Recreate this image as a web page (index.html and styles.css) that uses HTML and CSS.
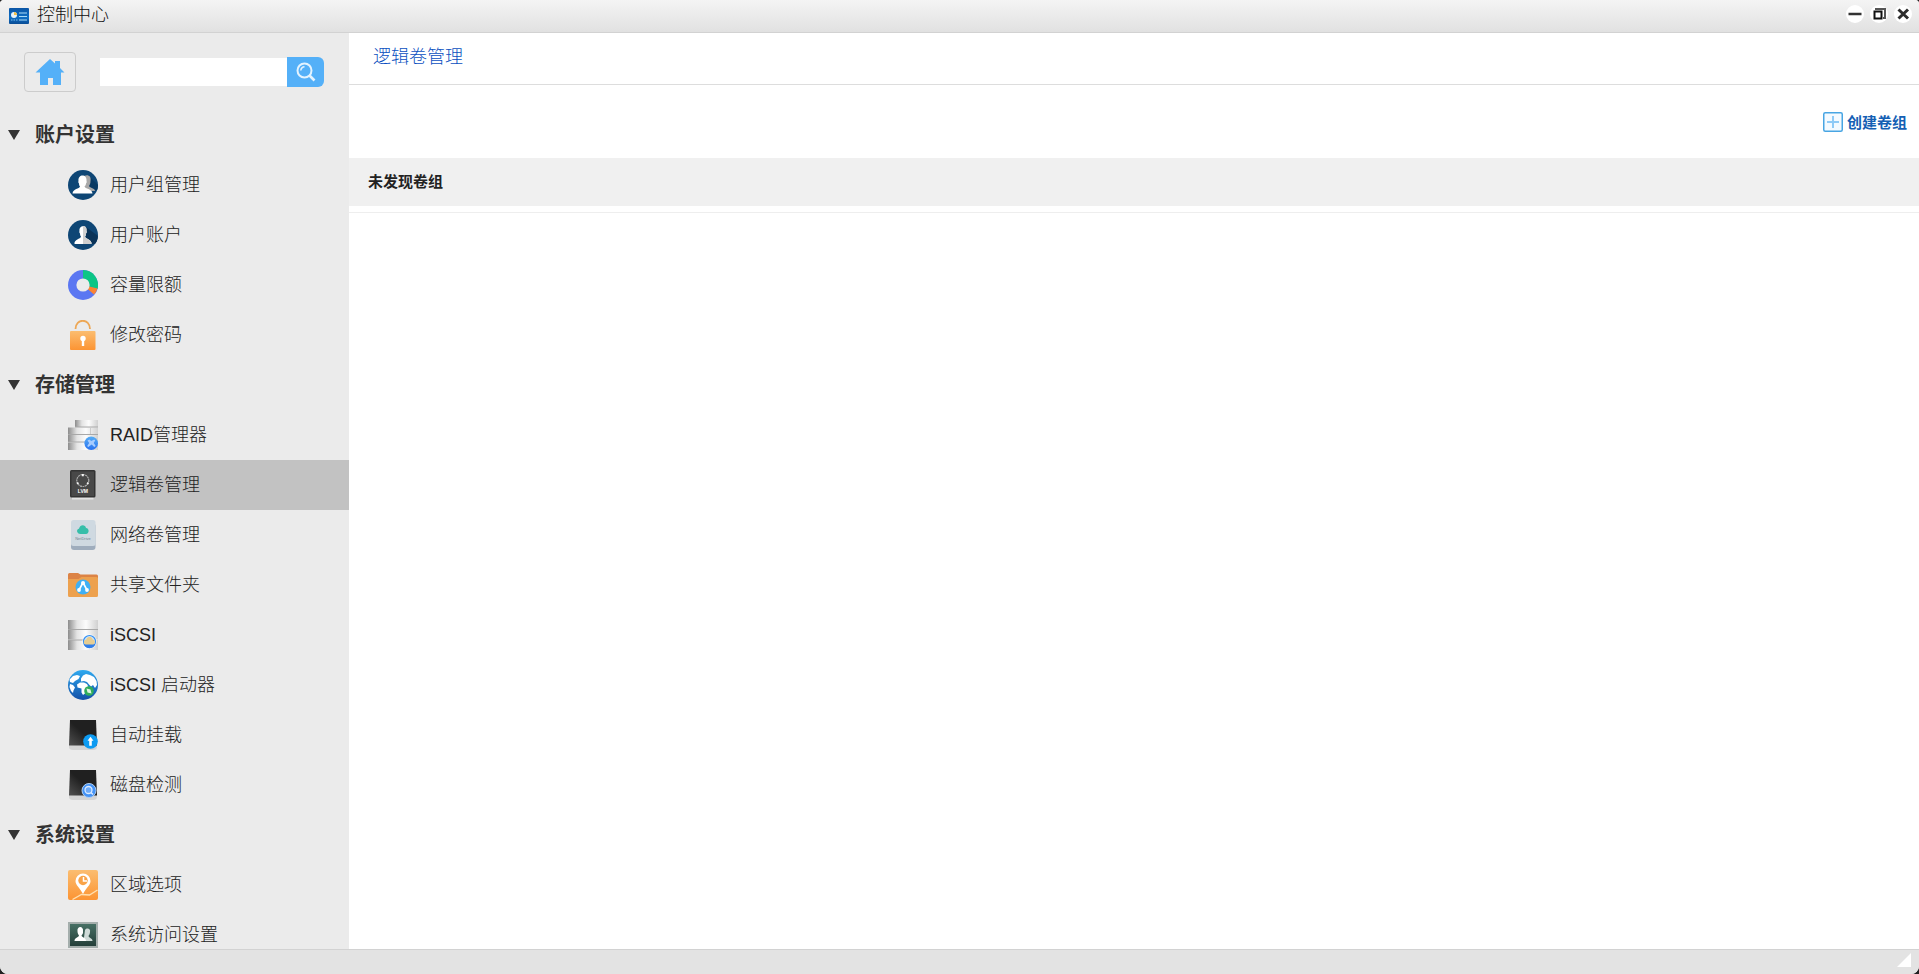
FILE: index.html
```html
<!DOCTYPE html>
<html lang="zh-CN">
<head>
    <meta charset="utf-8"/>
    <title>控制中心</title>
    <link rel="stylesheet" href="styles.css">
</head>

<body>
<div class="window">
    <div class="titlebar">
        <svg class="titlebar-icon" viewBox="0 0 20 16">
            <defs>
                <linearGradient id="gTitle" x1="0" y1="0" x2="0" y2="1"><stop offset="0" stop-color="#0b55a5"/><stop offset=".6" stop-color="#0f6ec4"/><stop offset="1" stop-color="#0a4c94"/></linearGradient>
            </defs>
            <rect width="20" height="16" rx="1" fill="url(#gTitle)"/>
            <circle cx="5" cy="7" r="3" fill="#e8f4fb"/>
            <path d="M5 7V4a3 3 0 0 1 3 3z" fill="#f2c14e"/>
            <path d="M2 12h1.500M4.500 12h1.500M7 12h1.500" stroke="#7fc0ee" stroke-width="1"/>
            <path d="M10 5h8M10 8.500h8M10 12h8" stroke="#a9dbf7" stroke-width="1.200"/>
        </svg>
        <h1 class="titlebar-text">控制中心</h1>
        <div class="titlebar-btns">
            <button type="button" aria-label="最小化"><svg viewBox="0 0 18 18"><path d="M2.500 9h13" stroke="#333" stroke-width="2.600"/></svg></button>
            <button type="button" aria-label="还原"><svg viewBox="0 0 18 18"><path d="M6 5V4h9v9h-2" fill="none" stroke="#555" stroke-width="2"/><rect x="4.500" y="6.500" width="7" height="7" fill="#fff" stroke="#111" stroke-width="2"/></svg></button>
            <button type="button" aria-label="关闭"><svg viewBox="0 0 18 18"><path d="M4.500 4.500l9.500 9M14 4.500l-9.500 9" stroke="#2c2c2c" stroke-width="3"/></svg></button>
        </div>
    </div>

    <div class="content">
        <div class="sidebar">
            <form class="search">
                <button type="button" class="search-home" aria-label="主页">
                    <svg viewBox="0 0 30 28"><path d="M15 1l5 4.600V3h5v7l4.500 4.500H26V27h-8v-7h-5v7H5V14.500H.5z" fill="#54b0f8"/></svg>
                </button>
                <input type="text" class="search-input" aria-label="搜索">
                <button type="submit" class="search-btn" aria-label="搜索">
                    <svg viewBox="0 0 20 20"><circle cx="8.500" cy="8.500" r="7" fill="none" stroke="#e4f3fe" stroke-width="2"/><path d="M4.800 8.500a3.700 3.700 0 0 1 3.700-3.700" fill="none" stroke="#e4f3fe" stroke-width="1.500"/><path d="M13.500 13.500l5 5" stroke="#e4f3fe" stroke-width="2.600"/></svg>
                </button>
            </form>

            <!-- 账户设置 -->
            <details class="menu" open>
                <summary><span>账户设置</span></summary>
                <ul>
                    <li><a href="#">
                        <svg viewBox="0 0 30 30">
                            <defs><clipPath id="cRound"><circle cx="15" cy="15" r="15"/></clipPath></defs>
                            <circle cx="15" cy="15" r="15" fill="#0e4675"/>
                            <path d="M20 5l10 10v5H20z" fill="#0a3a63" clip-path="url(#cRound)"/>
                            <path d="M16 6c4-2 7.500 0 6.500 5 0 3-1 4-1.500 5 1 2 6 2 6 5h-11z" fill="#a8a8a8"/>
                            <path d="M10.500 11c-1-7.500 9-7.500 8 0 .5 1 0 2-.5 2.500 0 1.500-1 2.500-1.500 3 .5 2.500 7.500 2 8 7h-20c.5-5 7-4.500 7.500-7-.5-.5-1-1.500-1-3-.5-.5-1-1.500-.5-2.500z" fill="#fff"/>
                        </svg>
                        <span>用户组管理</span></a></li>
                    <li><a href="#">
                        <svg viewBox="0 0 30 30">
                            <circle cx="15" cy="15" r="15" fill="#0e4675"/>
                            <path d="M18 7l12 9v8H18z" fill="#0a3358" clip-path="url(#cRound)"/>
                            <path d="M11.500 11c-1-6.500 8-6.500 7 0 .5 1 0 2-.5 2.500 0 1.500-.5 2.500-1 3 .5 3 7 2.500 6.500 7.500h-17c-.5-5 6-4.500 6.500-7.500-.5-.5-1-1.500-1-3-.5-.5-1-1.500-.5-2.500z" fill="#fff"/>
                            <path d="M15 6c3 0 4 2 3.500 5 .5 1 0 2-.5 2.500 0 1.500-.5 2.500-1 3 .5 3 7 2.500 6.500 7.500H15z" fill="#d0d0d0"/>
                        </svg>
                        <span>用户账户</span></a></li>
                    <li><a href="#">
                        <svg viewBox="0 0 30 30">
                            <circle cx="15" cy="15" r="15" fill="#5b77f2"/>
                            <path d="M15 15V0a15 15 0 0 1 14.500 19z" fill="#0cc585"/>
                            <path d="M15 15l14.500 3.500a15 15 0 0 1-3.500 6z" fill="#fb8433"/>
                            <circle cx="15" cy="15" r="6.600" fill="#ebebeb"/>
                        </svg>
                        <span>容量限额</span></a></li>
                    <li><a href="#">
                        <svg viewBox="0 0 30 30">
                            <defs><linearGradient id="gOrange" x1="0" y1="0" x2="0" y2="1"><stop offset="0" stop-color="#fbbd70"/><stop offset="1" stop-color="#fc9433"/></linearGradient></defs>
                            <path d="M7.500 9C7.500-2 22-2 22 9" fill="none" stroke="#eda755" stroke-width="1.800"/>
                            <rect x="2" y="11" width="25.500" height="19" rx="1" fill="url(#gOrange)"/>
                            <circle cx="15" cy="18.500" r="2.700" fill="#fff"/><rect x="13.800" y="19" width="2.400" height="7" fill="#fff"/>
                        </svg>
                        <span>修改密码</span></a></li>
                </ul>
            </details>

            <!-- 存储管理 -->
            <details class="menu" open>
                <summary><span>存储管理</span></summary>
                <ul>
                    <li><a href="#">
                        <svg viewBox="0 0 30 30">
                            <defs>
                                <linearGradient id="gSteel"><stop offset="0" stop-color="#8c8c8c"/><stop offset=".3" stop-color="#e4e4e4"/><stop offset=".6" stop-color="#fcfcfc"/><stop offset="1" stop-color="#d0d0d0"/></linearGradient>
                                <linearGradient id="gBlue" x1="0" y1="0" x2="0" y2="1"><stop offset="0" stop-color="#55adf5"/><stop offset="1" stop-color="#2a72ef"/></linearGradient>
                            </defs>
                            <rect x="7" width="23" height="7" fill="url(#gSteel)"/>
                            <rect y="7.500" width="30" height="7" fill="url(#gSteel)"/>
                            <rect y="15" width="30" height="7" fill="url(#gSteel)"/>
                            <rect y="22.500" width="30" height="7.500" fill="url(#gSteel)"/>
                            <path d="M7 7h23M0 14.500h30M0 22h22" stroke="#a8a8a8" stroke-width="1"/>
                            <path d="M22.500 8v6" stroke="#ccc"/>
                            <circle cx="23.200" cy="23.200" r="6.800" fill="url(#gBlue)"/>
                            <path d="M19.500 20.500l2-1 1.700 1.500 3-1.500 1 1-1.500 2.500 2 3-1.500 1-2.500-2.500-3.500 2.500-1-1 2-3z" fill="#a7ccff"/>
                        </svg>
                        <span>RAID管理器</span></a></li>
                    <li class="active"><a href="#">
                        <svg viewBox="0 0 30 30">
                            <rect x="4" y="26" width="21.500" height="3.500" fill="#e3e3e3"/>
                            <rect x="2" width="25.500" height="27.500" rx="1.500" fill="#333"/>
                            <rect x="3.500" y="1.500" width="22.500" height="24.500" fill="#484848"/>
                            <circle cx="14.800" cy="10.500" r="6" fill="none" stroke="#aaa" stroke-width="1.200" stroke-dasharray="2 .5"/>
                            <path d="M13.800 4h2v2.200h-2zM8.500 13l1.500-1 1 1.500-1.500 1zM21 13l-1.500-1-1 1.500 1.500 1z" fill="#f5f5f5"/>
                            <text x="14.800" y="23" class="icon-text" fill="#fff">LVM</text>
                        </svg>
                        <span>逻辑卷管理</span></a></li>
                    <li><a href="#">
                        <svg viewBox="0 0 30 30">
                            <rect x="3" y="3" width="24.500" height="27" rx="3" fill="#9fadbd"/>
                            <rect x="3" width="24.500" height="26" rx="2.500" fill="#cfd9e1"/>
                            <path d="M12.500 14c-4 0-4.500-5-1.500-5.200C12 4 17.500 4.500 18 8c3.500 0 3.500 6 0 6z" fill="#36bea9"/>
                            <text x="15" y="19.800" class="icon-text-small" fill="#728491">NetDrive</text>
                        </svg>
                        <span>网络卷管理</span></a></li>
                    <li><a href="#">
                        <svg viewBox="0 0 30 30">
                            <path d="M0 4.500Q0 3 1.500 3H10l2.500 1.500H28.500Q30 4.500 30 6v8H0z" fill="#dc8345"/>
                            <path d="M0 9h10.500l3-2H28.500Q30 7 30 8.500v17Q30 27 28.500 27h-27Q0 27 0 25.500z" fill="#eda14e"/>
                            <circle cx="15" cy="17" r="7.500" fill="#3fb0f5"/>
                            <path d="M14.500 13.500l-3.500 6.500M15.500 13.500l3.500 6.500" fill="none" stroke="#fff" stroke-width="1.600"/>
                            <circle cx="15" cy="13" r="2" fill="#fff"/><circle cx="11" cy="20" r="1.900" fill="#fff"/><circle cx="19" cy="20" r="1.900" fill="#fff"/>
                        </svg>
                        <span>共享文件夹</span></a></li>
                    <li><a href="#">
                        <svg viewBox="0 0 30 30">
                            <rect width="30" height="9.500" fill="url(#gSteel)"/><rect y="10" width="30" height="9.500" fill="url(#gSteel)"/><rect y="20" width="30" height="10" fill="url(#gSteel)"/>
                            <path d="M0 9.500h30M0 20h16" stroke="#a8a8a8"/>
                            <circle cx="21.500" cy="21.500" r="7" fill="#fff"/>
                            <circle cx="21.500" cy="21.500" r="6" fill="#cfe6fb" stroke="#348ff1" stroke-width="1.200"/>
                            <path d="M15.800 24h11.400a6 6 0 0 1-11.400 0z" fill="#317eea"/>
                            <path d="M17.500 24.500c-2.500-1-2-5 .8-5 1-4 5.800-3.500 6.400 0 2.800 0 2.800 4 .8 5z" fill="#e7cd91"/>
                        </svg>
                        <span>iSCSI</span></a></li>
                    <li><a href="#">
                        <svg viewBox="0 0 30 30">
                            <defs><linearGradient id="gGlobe" x1="0" y1="0" x2="0" y2="1"><stop offset="0" stop-color="#2fa9ef"/><stop offset="1" stop-color="#1250a8"/></linearGradient></defs>
                            <circle cx="15" cy="15" r="15" fill="url(#gGlobe)"/>
                            <path d="M1.500 9.500L5 6l4-1 3 1-1.500 3L7 11l-2 2-3-1z" fill="#fff"/>
                            <path d="M2 14l3 1 2 2.500-1.500 3L5 23l-2-2-1.500-4z" fill="#fff"/>
                            <path d="M13 8.500l2-3 3-1.500 4 1 4 2 2.500 4 .5 4-2 3-2-3-2 1.500-2-2-2-2.500-3-1-3 .5z" fill="#fff"/>
                            <path d="M9 14.500l3-2h4l3 1.500 1.500 3-2 2.500-1 3.500-2.500 2-1.500-2.500v-4l-4-1z" fill="#fff"/>
                            <circle cx="21" cy="21" r="4.800" fill="#30ad5b"/>
                            <path d="M18.500 18.500l4 1 1 4-4-1z" fill="#dff5df"/>
                        </svg>
                        <span>iSCSI 启动器</span></a></li>
                    <li><a href="#">
                        <svg viewBox="0 0 30 30">
                            <defs><linearGradient id="gDisk" x1="1" y1="0" x2="0" y2="1"><stop offset=".5" stop-color="#202020"/><stop offset="1" stop-color="#505050"/></linearGradient></defs>
                            <path d="M1 24h28v3q0 3-4 3H5q-4 0-4-3z" fill="#d4d4d4"/>
                            <path d="M2 0h26l1 25.500H1z" fill="url(#gDisk)"/>
                            <circle cx="22.500" cy="21.500" r="7.300" fill="#0d9bf2"/>
                            <path d="M22.500 16.800l3 4h-1.700v5h-2.600v-5h-1.700z" fill="#fff"/>
                        </svg>
                        <span>自动挂载</span></a></li>
                    <li><a href="#">
                        <svg viewBox="0 0 30 30">
                            <path d="M1 24h28v3q0 3-4 3H5q-4 0-4-3z" fill="#d4d4d4"/>
                            <path d="M2 0h26l1 25.500H1z" fill="url(#gDisk)"/>
                            <circle cx="21" cy="20.500" r="7" fill="#4493f7" stroke="#b1cff2" stroke-width="1"/>
                            <circle cx="20.500" cy="20" r="3.500" fill="#6daaf8" stroke="#dcecff" stroke-width="1.300"/>
                            <path d="M23 22.500l2 2" stroke="#dcecff" stroke-width="1.500"/>
                        </svg>
                        <span>磁盘检测</span></a></li>
                </ul>
            </details>

            <!-- 系统设置 -->
            <details class="menu" open>
                <summary><span>系统设置</span></summary>
                <ul>
                    <li><a href="#">
                        <svg viewBox="0 0 30 30">
                            <rect width="30" height="30" rx="2" fill="url(#gOrange)"/>
                            <path d="M4.500 29.500l9-5 8 .5 8-5" fill="none" stroke="#ffe0b0" stroke-width="1.300"/>
                            <path d="M15 24C11.500 17.500 7.500 15 7.500 11a7.500 7.500 0 0 1 15 0c0 4-4 6.500-7.500 13z" fill="#fff"/>
                            <circle cx="15" cy="10.500" r="4.700" fill="#f9a348"/>
                            <path d="M15.500 7v4h3.500" fill="none" stroke="#fff" stroke-width="1.500"/>
                        </svg>
                        <span>区域选项</span></a></li>
                    <li><a href="#">
                        <svg viewBox="0 0 30 30">
                            <defs><linearGradient id="gBoard" x1="0" y1="0" x2="0" y2="1"><stop offset="0" stop-color="#487266"/><stop offset="1" stop-color="#233d38"/></linearGradient></defs>
                            <rect x="1" y="3" width="28" height="24" fill="url(#gBoard)" stroke="#a4aeac" stroke-width="2"/>
                            <path d="M17 10c2-3 6-1 5 2 0 2-1 3-1.500 4 .5 2 4 2 4 5h-9z" fill="#cfdbd8"/>
                            <path d="M9.500 11.500c-1-6 6.500-6 5.500 0 .5 2-1 3-1.500 4 .5 2 4.500 2 4.500 5.500H6.500c0-3.500 4-3.500 4.500-5.500-.5-1-1.500-2-1.500-4z" fill="#fff"/>
                        </svg>
                        <span>系统访问设置</span></a></li>
                </ul>
            </details>
        </div>

        <div class="main">
            <h2 class="main-title">逻辑卷管理</h2>
            <div class="toolbar">
                <button type="button" class="create-btn">
                    <svg viewBox="0 0 20 20"><rect x=".75" y=".75" width="18.500" height="18.500" rx="1.500" fill="#f4faff" stroke="#48a5e3" stroke-width="1.500"/><path d="M4 10h12M10 4v12" stroke="#8fcaf6" stroke-width="2"/></svg>
                    <span>创建卷组</span>
                </button>
            </div>
            <div class="list-empty">未发现卷组</div>
            <div class="list-line"></div>
        </div>
    </div>

    <div class="statusbar">
        <svg class="resize" viewBox="0 0 14 14"><path d="M14 0v14H0z" fill="#fff"/></svg>
    </div>
</div>
</body>
</html>
```
FILE: styles.css
```css
* {
    margin: 0;
    padding: 0;
    box-sizing: border-box;
}

body {
    background: #222;
    font-family: "Liberation Sans", "Noto Sans CJK SC", sans-serif;
    font-size: 18px;
    font-weight: 300;
    color: #222;
}

ul li {
    list-style: none;
}

a {
    color: inherit;
    text-decoration: none;
}

button {
    border: 0;
    background: none;
    font-family: inherit;
    cursor: pointer;
}

svg {
    display: block;
    flex: none;
}

.window {
    display: flex;
    flex-direction: column;
    height: 100vh;
    border-radius: 4px 4px 8px 8px;
    overflow: hidden;
    background: #fff;
}

/* 标题栏 */
.titlebar {
    display: flex;
    align-items: center;
    flex: none;
    height: 33px;
    padding: 0 7px 4px 9px;
    border-bottom: 1px solid #d2d2d2;
    background: linear-gradient(#f4f4f4, #e1e1e1);
}

.titlebar-icon {
    width: 20px;
    height: 16px;
    margin-top: 3px;
}

.titlebar-text {
    padding-top: 2px;
    margin-left: 8px;
    font-size: 18px;
    font-weight: 300;
    line-height: 26px;
    color: #111;
}

.titlebar-btns {
    display: flex;
    gap: 6px;
    margin-left: auto;
}

.titlebar-btns button {
    width: 18px;
    height: 18px;
    border-radius: 9px;
    background: #fff;
}

.content {
    display: flex;
    flex: 1;
    min-height: 0;
}

/* 左侧菜单 */
.sidebar {
    flex: none;
    width: 349px;
    overflow: hidden;
    background: #ebebeb;
}

.search {
    display: flex;
    align-items: center;
    height: 77px;
    padding: 0 25px 0 24px;
}

.search-home {
    display: flex;
    align-items: center;
    justify-content: center;
    width: 52px;
    height: 40px;
    margin-right: 24px;
    border: 1px solid #ccc;
    border-radius: 4px;
}

.search-home svg {
    width: 30px;
    height: 28px;
}

.search-input {
    flex: 1;
    min-width: 0;
    height: 28px;
    padding: 0 6px;
    border: 0;
    background: #fff;
    font-size: 16px;
}

.search-btn {
    display: flex;
    align-items: center;
    justify-content: center;
    width: 37px;
    height: 30px;
    border-radius: 0 6px 6px 0;
    background: #54b0f8;
}

.search-btn svg {
    width: 20px;
    height: 20px;
}

.menu summary {
    display: flex;
    align-items: center;
    height: 50px;
    padding-left: 8px;
    font-size: 20px;
    font-weight: bold;
    color: #333;
    cursor: pointer;
}

.menu summary::before {
    content: "";
    margin-right: 15px;
    border: 6px solid transparent;
    border-top: 10px solid #333;
    border-bottom: 0;
}

.menu a {
    display: flex;
    align-items: center;
    gap: 12px;
    height: 50px;
    padding-left: 68px;
}

.menu a svg {
    width: 30px;
    height: 30px;
}

.menu span {
    line-height: 26px;
}

.menu .active {
    background: #c2c2c2;
}

.icon-text {
    font-size: 5px;
    font-weight: bold;
    text-anchor: middle;
}

.icon-text-small {
    font-size: 4px;
    text-anchor: middle;
}

/* 右侧内容 */
.main {
    flex: 1;
    min-width: 0;
    background: #fff;
}

.main-title {
    height: 52px;
    padding-left: 24px;
    border-bottom: 1px solid #ddd;
    font-size: 18px;
    font-weight: 300;
    line-height: 48px;
    color: #0a4fc0;
}

.toolbar {
    display: flex;
    align-items: center;
    justify-content: flex-end;
    height: 73px;
    padding-right: 12px;
}

.create-btn {
    display: flex;
    align-items: center;
    gap: 4px;
    font-size: 15px;
    font-weight: bold;
    color: #1560b4;
}

.create-btn svg {
    width: 20px;
    height: 20px;
}

.list-empty {
    height: 48px;
    padding-left: 19px;
    background: #f0f0f0;
    font-size: 15px;
    font-weight: bold;
    line-height: 48px;
}

.list-line {
    height: 7px;
    border-bottom: 1px solid #eee;
}

/* 底部状态栏 */
.statusbar {
    display: flex;
    justify-content: flex-end;
    flex: none;
    height: 25px;
    padding: 3px 8px 0 0;
    border-top: 1px solid #d2d2d2;
    background: #e3e3e3;
}

.resize {
    width: 14px;
    height: 14px;
}
```
